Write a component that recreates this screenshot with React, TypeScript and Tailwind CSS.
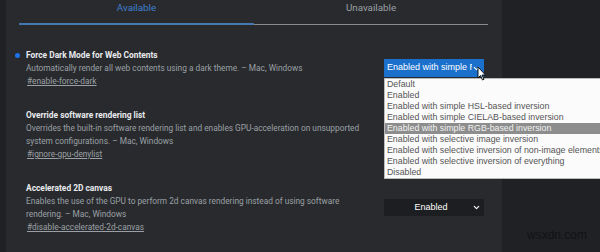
import { ChevronDown } from "lucide-react";

const options = [
    "Default",
    "Enabled",
    "Enabled with simple HSL-based inversion",
    "Enabled with simple CIELAB-based inversion",
    "Enabled with simple RGB-based inversion",
    "Enabled with selective image inversion",
    "Enabled with selective inversion of non-image elements",
    "Enabled with selective inversion of everything",
    "Disabled",
];

const flags = [
    {
        title: "Force Dark Mode for Web Contents",
        desc: ["Automatically render all web contents using a dark theme. – Mac, Windows"],
        link: "#enable-force-dark",
        active: true,
    },
    {
        title: "Override software rendering list",
        desc: [
            "Overrides the built-in software rendering list and enables GPU-acceleration on unsupported",
            "system configurations. – Mac, Windows",
        ],
        link: "#ignore-gpu-denylist",
    },
    {
        title: "Accelerated 2D canvas",
        desc: [
            "Enables the use of the GPU to perform 2d canvas rendering instead of using software",
            "rendering. – Mac, Windows",
        ],
        link: "#disable-accelerated-2d-canvas",
        select: "Enabled",
    },
];

const Cursor = () => (
    <svg width="10" height="15" viewBox="0 0 10 15" className="absolute left-[477px] top-[66px]">
        <path d="M1 1 L1 12 L3.5 9.5 L5.5 14 L7 13.3 L5 9 L8.5 9 Z" fill="#fff" stroke="#000" strokeWidth="0.9" />
    </svg>
);

export default function App() {
    return (
        <div className="relative w-[600px] h-[252px] overflow-hidden bg-[#202124] flex font-['Roboto',sans-serif]">
            {/* main panel */}
            <div className="ml-[6px] w-[496px] h-full bg-[#292a2d]">
                {/* tabs */}
                <div className="flex ml-[13px] w-[469px]">
                    <div className="w-[235px] h-[25px] pb-[7px] flex items-center justify-center text-[9.8px] text-[#3f7fcf] border-b-2 border-[#4379b0]">
                        Available
                    </div>
                    <div className="w-[234px] h-[25px] pb-[7px] flex items-center justify-center text-[9.8px] text-[#9aa0a6] border-b border-[#8a8a8a] mb-[1px]">
                        Unavailable
                    </div>
                </div>

                {/* experiments */}
                <div className="flex flex-col gap-[20px] pt-[22px] pl-[14px] pr-[18px]">
                    {flags.map((f, i) => (
                        <div key={i} className="flex items-center">
                            <div className="flex-1">
                                <div className="flex items-center h-[14px] relative">
                                    {f.active && (
                                        <span className="absolute -left-[5px] w-[5px] h-[5px] rounded-full bg-[#1a73e8]" />
                                    )}
                                    <span className="pl-[6px] text-[8.4px] font-bold text-[#e8eaed]">{f.title}</span>
                                </div>
                                {f.desc.map((d, j) => (
                                    <p key={j} className="pl-[6px] h-[13px] leading-[13px] text-[8.3px] text-[#9aa0a6] whitespace-nowrap">
                                        {d}
                                    </p>
                                ))}
                                <p className="pl-[7px] h-[13px] leading-[13px] text-[8.3px] text-[#9aa0a6] underline">{f.link}</p>
                            </div>
                            {i === 0 && (
                                <div className="w-[100px] h-[18px] bg-[#1b70cc] flex items-center pl-[3px] pr-[3px] text-white text-[9px] font-['Liberation_Sans',sans-serif]">
                                    <span className="w-[86px] overflow-hidden whitespace-nowrap">Enabled with simple RGB</span>
                                    <ChevronDown size={9} strokeWidth={3} className="ml-auto" />
                                </div>
                            )}
                            {i === 2 && (
                                <div className="w-[100px] h-[17px] bg-[#1d1e21] flex items-center pr-[3px] text-white text-[9px] font-['Liberation_Sans',sans-serif]">
                                    <span className="flex-1 text-center pl-[6px]">{f.select}</span>
                                    <ChevronDown size={9} strokeWidth={3} />
                                </div>
                            )}
                        </div>
                    ))}
                </div>
            </div>

            {/* open dropdown list, runs past the window edge */}
            <div className="absolute left-[384px] top-[78px] w-[240px] bg-[#fbfbfb] border border-[#bbb] font-['Liberation_Sans',sans-serif] text-[8.8px]">
                {options.map((o, i) => (
                    <div
                        key={i}
                        className={
                            i === 4
                                ? "h-[11px] leading-[11px] pl-[2px] whitespace-nowrap bg-[#8d8d8d] text-[#f2f2f2]"
                                : "h-[11px] leading-[11px] pl-[2px] whitespace-nowrap text-[#555555]"
                        }
                    >
                        {o}
                    </div>
                ))}
            </div>

            <Cursor />

            <div className="absolute left-[527px] top-[226px] text-[12px] text-[#111214] font-['Liberation_Sans',sans-serif]">
                wsxdn.com
            </div>
        </div>
    );
}
